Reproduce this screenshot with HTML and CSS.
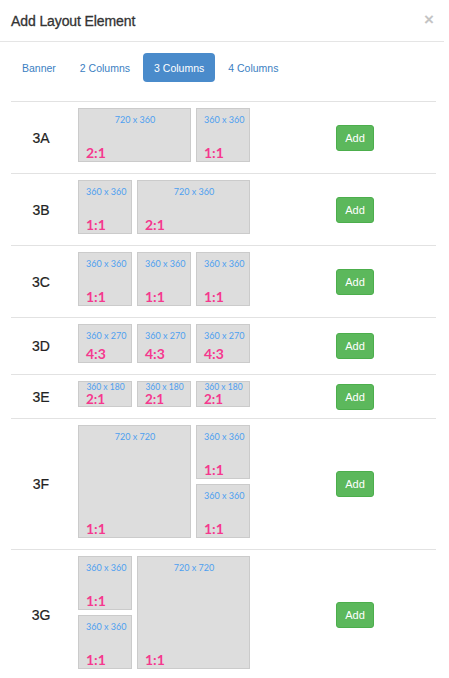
FILE: index.html
```html
<!DOCTYPE html>
<html>
<head>
<meta charset="utf-8">
<link rel="stylesheet" href="styles.css">
</head>
<body>
<div class="modal">
  <div class="modal-header">
    <h4 class="title">Add Layout Element</h4>
    <span class="close">×</span>
  </div>
  <div class="modal-body">
    <ul class="tabs">
      <li class="tab">Banner</li>
      <li class="tab">2 Columns</li>
      <li class="tab active">3 Columns</li>
      <li class="tab">4 Columns</li>
    </ul>
    <div class="table">
      <div class="row">
        <div class="label">3A</div>
        <div class="boxes r54">
          <div class="box wide"><span class="dim">720 x 360</span><span class="ratio">2:1</span></div>
          <div class="box"><span class="dim">360 x 360</span><span class="ratio">1:1</span></div>
        </div>
        <div class="action"><button class="btn">Add</button></div>
      </div>
      <div class="row">
        <div class="label">3B</div>
        <div class="boxes r54">
          <div class="box"><span class="dim">360 x 360</span><span class="ratio">1:1</span></div>
          <div class="box wide"><span class="dim">720 x 360</span><span class="ratio">2:1</span></div>
        </div>
        <div class="action"><button class="btn">Add</button></div>
      </div>
      <div class="row">
        <div class="label">3C</div>
        <div class="boxes r54">
          <div class="box"><span class="dim">360 x 360</span><span class="ratio">1:1</span></div>
          <div class="box"><span class="dim">360 x 360</span><span class="ratio">1:1</span></div>
          <div class="box"><span class="dim">360 x 360</span><span class="ratio">1:1</span></div>
        </div>
        <div class="action"><button class="btn">Add</button></div>
      </div>
      <div class="row">
        <div class="label">3D</div>
        <div class="boxes r39">
          <div class="box"><span class="dim">360 x 270</span><span class="ratio">4:3</span></div>
          <div class="box"><span class="dim">360 x 270</span><span class="ratio">4:3</span></div>
          <div class="box"><span class="dim">360 x 270</span><span class="ratio">4:3</span></div>
        </div>
        <div class="action"><button class="btn">Add</button></div>
      </div>
      <div class="row">
        <div class="label">3E</div>
        <div class="boxes r26">
          <div class="box short"><span class="dim">360 x 180</span><span class="ratio">2:1</span></div>
          <div class="box short"><span class="dim">360 x 180</span><span class="ratio">2:1</span></div>
          <div class="box short"><span class="dim">360 x 180</span><span class="ratio">2:1</span></div>
        </div>
        <div class="action"><button class="btn">Add</button></div>
      </div>
      <div class="row">
        <div class="label">3F</div>
        <div class="boxes r54">
          <div class="box big"><span class="dim">720 x 720</span><span class="ratio">1:1</span></div>
          <div class="box"><span class="dim">360 x 360</span><span class="ratio">1:1</span></div>
          <div class="box"><span class="dim">360 x 360</span><span class="ratio">1:1</span></div>
        </div>
        <div class="action"><button class="btn">Add</button></div>
      </div>
      <div class="row">
        <div class="label">3G</div>
        <div class="boxes r54">
          <div class="box"><span class="dim">360 x 360</span><span class="ratio">1:1</span></div>
          <div class="box big"><span class="dim">720 x 720</span><span class="ratio">1:1</span></div>
          <div class="box"><span class="dim">360 x 360</span><span class="ratio">1:1</span></div>
        </div>
        <div class="action"><button class="btn">Add</button></div>
      </div>
    </div>
  </div>
</div>
</body>
</html>
```
FILE: styles.css
```css
* { box-sizing: border-box; }
html, body { margin: 0; padding: 0; background: #fff; }
body { font-family: "Liberation Sans", Arial, sans-serif; color: #333; }

.modal { width: 444px; }

.modal-header {
  height: 42px;
  border-bottom: 1px solid #e5e5e5;
  display: flex;
  align-items: center;
  justify-content: space-between;
  padding: 0 10px 0 11px;
}
.title {
  margin: 0;
  font-size: 14px;
  font-weight: normal;
  -webkit-text-stroke: 0.3px #333;
  color: #333;
  letter-spacing: -0.1px;
}
.close {
  font-size: 17px;
  font-weight: bold;
  color: #c4c4c4;
  line-height: 1;
  margin-top: -2px;
}

.modal-body { padding: 11px 8px 0 11px; }

.tabs {
  list-style: none;
  margin: 0;
  padding: 0;
  display: flex;
  gap: 2px;
}
.tab {
  height: 29px;
  padding: 0 11px;
  display: flex;
  align-items: center;
  font-size: 10.5px;
  color: #3b80c2;
  border-radius: 4px;
}
.tab.active {
  background: #4a8bcb;
  color: #fff;
}

.table { margin-top: 19px; width: 425px; }

.row {
  display: grid;
  grid-template-columns: 60px 203px 1fr;
  align-items: center;
  border-top: 1px solid #e2e2e2;
}
.label {
  text-align: center;
  font-size: 14px;
  color: #222;
  -webkit-text-stroke: 0.2px #222;
}
.boxes {
  display: grid;
  grid-template-columns: repeat(3, 54px);
  gap: 5px;
  padding: 6px 0 11px 7px;
}
.boxes.r54 { grid-auto-rows: 54px; }
.boxes.r39 { grid-auto-rows: 39px; }
.boxes.r26 { grid-auto-rows: 26px; }

.box {
  background: #dddddd;
  border: 1px solid #cbcbcb;
  display: flex;
  flex-direction: column;
  justify-content: space-between;
  padding: 5px 6px 1px 7px;
  font-family: Lato, "Liberation Sans", sans-serif;
  overflow: hidden;
}
.box.wide { grid-column: span 2; }
.box.big { grid-column: span 2; grid-row: span 2; }
.box.short { padding-top: 0; padding-bottom: 0; }

.dim {
  display: block;
  text-align: center;
  font-size: 9px;
  line-height: 11px;
  color: #4d9ff0;
  white-space: nowrap;
}
.short .dim { line-height: 10px; font-size: 8.5px; }
.ratio {
  display: block;
  font-size: 14px;
  line-height: 14px;
  font-weight: bold;
  color: #f5388e;
}
.short .ratio { font-size: 13.5px; line-height: 13px; }

.action { display: flex; justify-content: center; }
.btn {
  width: 38px;
  height: 26px;
  background: #5cb85c;
  border: 1px solid #4cae4c;
  border-radius: 3px;
  color: #fff;
  font-family: "Liberation Sans", Arial, sans-serif;
  font-size: 11px;
  padding: 0;
}
```
